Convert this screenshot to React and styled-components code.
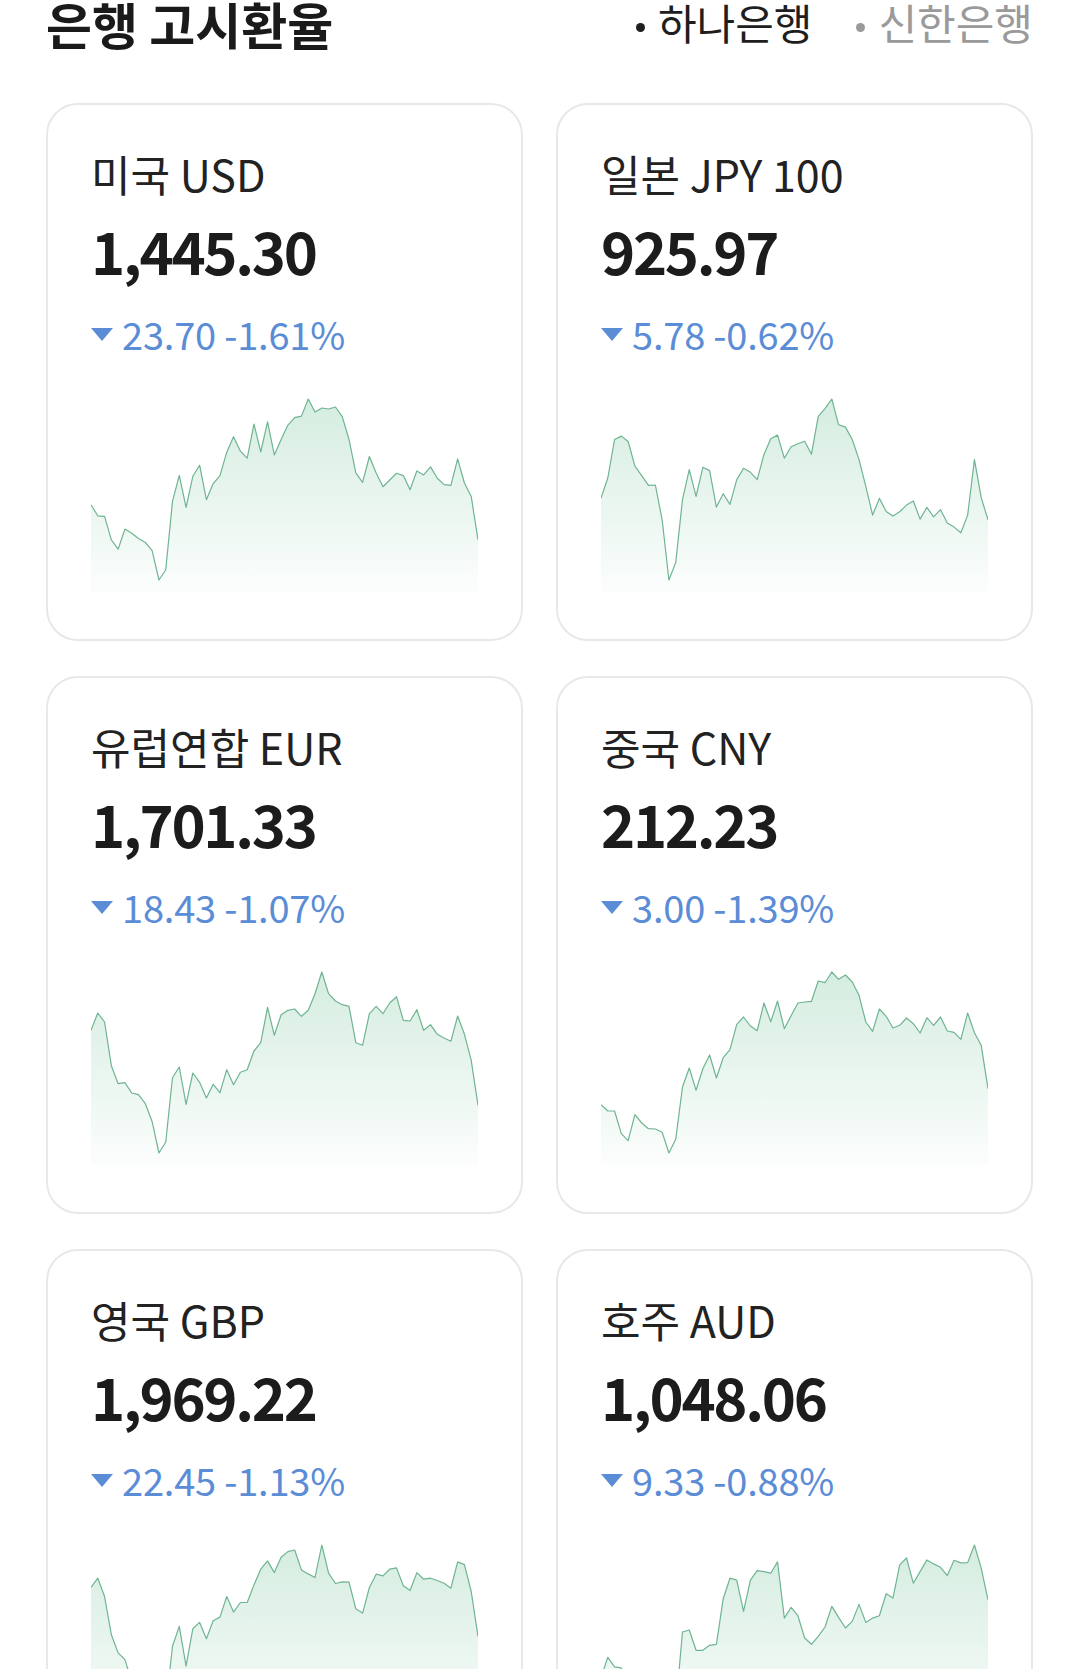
import React from 'react';
import styled, { createGlobalStyle } from 'styled-components';

const GlobalStyle = createGlobalStyle`
  body {
    margin: 0;
    background: #fff;
    font-family: "Noto Sans CJK KR", "Noto Sans", sans-serif;
  }
`;

const Page = styled.div`
  padding: 0 47px 0 46px;
`;

const Header = styled.header`
  display: flex;
  justify-content: space-between;
  align-items: flex-start;
  height: 48px;
  margin-bottom: 55px;
`;

const Title = styled.h1`
  margin: 0;
  font-size: 50px;
  line-height: 46px;
  font-weight: 700;
  color: #1a1a1a;
`;

const Tabs = styled.div`
  display: flex;
  gap: 44px;
  margin-top: 1px;
`;

const Tab = styled.span`
  display: inline-flex;
  align-items: center;
  font-size: 42px;
  line-height: 1;
  color: ${(p) => (p.$active ? '#1e1e1e' : '#9a9a9a')};
  &::before {
    content: '';
    width: 9px;
    height: 9px;
    border-radius: 50%;
    background: currentColor;
    margin: 11px 13px 0 0;
  }
`;

const Grid = styled.div`
  display: grid;
  grid-template-columns: 1fr 1fr;
  column-gap: 33px;
  row-gap: 35px;
`;

const Card = styled.div`
  box-sizing: border-box;
  border: 2px solid #e8e8e8;
  border-radius: 32px;
  padding: 47px 43px 47px;
`;

const Name = styled.div`
  font-size: 43px;
  line-height: 1;
  color: #222;
`;

const Value = styled.div`
  margin-top: 26px;
  font-size: 58px;
  line-height: 1;
  font-weight: 700;
  letter-spacing: -2.3px;
  color: #1c1c1c;
`;

const Change = styled.div`
  margin-top: 36px;
  display: flex;
  align-items: center;
  gap: 9px;
  font-size: 38px;
  line-height: 1;
  letter-spacing: -0.2px;
  color: #5b8cd6;
`;

const Chart = styled.svg`
  display: block;
  margin-top: 36px;
  width: 100%;
  height: 203px;
`;

const W = 388;
const H = 203;

const Sparkline = ({ id, data }) => {
  const lo = Math.min(...data);
  const hi = Math.max(...data);
  const pts = data.map((v, i) => [
    (i * W) / (data.length - 1),
    10 + ((v - lo) / (hi - lo)) * 181,
  ]);
  const line = pts.map(([x, y], i) => `${i ? 'L' : 'M'}${x.toFixed(1)} ${y.toFixed(1)}`).join(' ');
  const area = `${line} L${W} ${H} L0 ${H} Z`;
  return (
    <Chart viewBox={`0 0 ${W} ${H}`} preserveAspectRatio="none">
      <defs>
        <linearGradient id={id} x1="0" y1="0" x2="0" y2="1">
          <stop offset="0%" stopColor="#4fb27f" stopOpacity="0.24" />
          <stop offset="100%" stopColor="#4fb27f" stopOpacity="0.02" />
        </linearGradient>
      </defs>
      <path d={area} fill={`url(#${id})`} />
      <path d={line} fill="none" stroke="#6fb491" strokeWidth="1.2" strokeLinejoin="round" />
    </Chart>
  );
};

const rates = [
  {
    name: '미국 USD', value: '1,445.30', change: '23.70 -1.61%',
    data: [435, 468, 470, 540, 568, 508, 520, 536, 548, 572, 660, 630, 425, 347, 443, 350, 317, 420, 372, 348,
      278, 232, 275, 296, 194, 277, 187, 286, 240, 197, 175, 170, 119, 158, 146, 149, 143, 172, 240, 340,
      368, 291, 340, 381, 361, 341, 348, 390, 334, 346, 322, 356, 375, 377, 298, 370, 410, 540],
  },
  {
    name: '일본 JPY 100', value: '925.97', change: '5.78 -0.62%',
    data: [415, 355, 240, 230, 246, 320, 348, 377, 376, 480, 660, 608, 420, 330, 410, 323, 333, 442, 402, 434,
      360, 326, 338, 360, 285, 238, 227, 296, 262, 253, 245, 284, 171, 148, 119, 196, 203, 240, 300, 380,
      466, 416, 455, 469, 456, 436, 424, 478, 443, 471, 450, 490, 502, 519, 466, 300, 414, 480],
  },
  {
    name: '유럽연합 EUR', value: '1,701.33', change: '18.43 -1.07%',
    data: [210, 158, 185, 316, 370, 367, 398, 403, 430, 484, 578, 546, 352, 320, 432, 338, 366, 413, 372, 397,
      328, 373, 336, 328, 272, 247, 141, 225, 163, 150, 146, 168, 150, 100, 35, 100, 122, 133, 138, 247,
      255, 160, 138, 160, 128, 109, 180, 182, 148, 210, 193, 222, 233, 243, 167, 222, 300, 435],
  },
  {
    name: '중국 CNY', value: '212.23', change: '3.00 -1.39%',
    data: [433, 452, 452, 520, 541, 463, 488, 505, 506, 516, 578, 537, 380, 323, 390, 325, 284, 353, 292, 268,
      192, 170, 197, 211, 128, 184, 122, 205, 166, 128, 125, 123, 62, 67, 35, 57, 44, 65, 105, 185,
      213, 146, 168, 203, 195, 173, 190, 218, 172, 195, 170, 212, 216, 237, 158, 217, 255, 385],
  },
  {
    name: '영국 GBP', value: '1,969.22', change: '22.45 -1.13%',
    data: [198, 170, 225, 340, 395, 415, 480, 530, 540, 570, 615, 560, 375, 315, 435, 322, 303, 352, 298, 287,
      225, 272, 243, 243, 190, 143, 118, 153, 107, 90, 85, 145, 157, 168, 70, 155, 186, 181, 182, 262,
      275, 198, 158, 163, 143, 139, 193, 207, 153, 173, 170, 177, 185, 200, 121, 129, 210, 345],
  },
  {
    name: '호주 AUD', value: '1,048.06', change: '9.33 -0.88%',
    data: [470, 408, 437, 440, 480, 510, 540, 530, 570, 590, 615, 560, 332, 326, 387, 387, 372, 369, 232, 170,
      176, 270, 176, 147, 150, 155, 121, 290, 258, 283, 350, 369, 345, 317, 255, 288, 320, 300, 249, 303,
      290, 283, 217, 230, 130, 109, 185, 150, 115, 127, 137, 162, 116, 124, 123, 70, 140, 235],
  },
];

const DownArrow = () => (
  <svg width="22" height="13" viewBox="0 0 22 13">
    <path d="M0 0 H22 L11 13 Z" fill="#5b8cd6" />
  </svg>
);

export default function App() {
  return (
    <>
      <GlobalStyle />
      <Page>
        <Header>
          <Title>은행 고시환율</Title>
          <Tabs>
            <Tab $active>하나은행</Tab>
            <Tab>신한은행</Tab>
          </Tabs>
        </Header>
        <Grid>
          {rates.map((r, i) => (
            <Card key={r.name}>
              <Name>{r.name}</Name>
              <Value>{r.value}</Value>
              <Change>
                <DownArrow />
                {r.change}
              </Change>
              <Sparkline id={`grad${i}`} data={r.data} />
            </Card>
          ))}
        </Grid>
      </Page>
    </>
  );
}
